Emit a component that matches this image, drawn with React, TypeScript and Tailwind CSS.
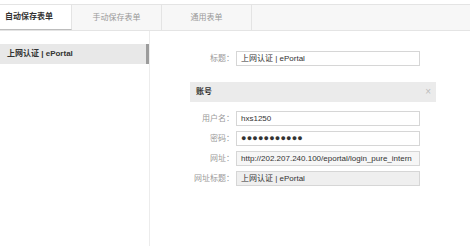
import React from "react";

const font = { fontFamily: '"Liberation Sans", "Noto Sans CJK SC", sans-serif' };

function Row({ label, children }: { label: string; children: React.ReactNode }) {
  return (
    <div className="flex items-center h-[15px]">
      <div className="w-[46px] pr-[2px] text-right text-[#999] whitespace-nowrap">{label}</div>
      {children}
    </div>
  );
}

function Field({ value, bg = "bg-white", dots = false }: { value: string; bg?: string; dots?: boolean }) {
  return (
    <div
      className={`w-[184px] h-[15px] border border-[#d6d6d6] ${bg} flex items-center pl-[4px] overflow-hidden whitespace-nowrap text-[#333]`}
    >
      {dots ? <span className="text-[9px] tracking-[0.2px] leading-none">●●●●●●●●●●●</span> : value}
    </div>
  );
}

export default function App() {
  return (
    <div className="w-[470px] h-[246px] bg-white flex flex-col text-[8px] overflow-hidden" style={font}>
      <div className="h-[4px] shrink-0" />
      <div className="flex h-[27px] shrink-0 bg-[#f7f7f7] border-t border-b border-[#e4e4e4]">
        <div className="w-[72px] bg-white border-r border-[#e4e4e4] border-b border-b-[#bdbdbd] flex items-center pl-[5px] font-bold text-[#333]">
          自动保存表单
        </div>
        <div className="w-[90px] border-r border-[#e4e4e4] flex items-center justify-center text-[#999]">
          手动保存表单
        </div>
        <div className="w-[90px] border-r border-[#e4e4e4] flex items-center justify-center text-[#999]">
          通用表单
        </div>
        <div className="flex-1" />
      </div>
      <div className="flex flex-1">
        <div className="w-[150px] border-r border-[#ececec] pt-[13px]">
          <div className="h-[20px] bg-[#e8e8e8] border-r-[3px] border-[#9c9c9c] flex items-center pl-[7px] font-bold text-[#333] whitespace-nowrap">
            上网认证 | ePortal
          </div>
        </div>
        <div className="flex-1 pl-[40px] pt-[20px]">
          <div className="w-[246px] flex flex-col">
            <Row label="标题：">
              <Field value="上网认证 | ePortal" />
            </Row>
            <div className="mt-[16px] h-[20px] bg-[#ebebeb] flex items-center justify-between pl-[6px] pr-[5px]">
              <span className="font-bold text-[#333]">账号</span>
              <span className="text-[#bbbbbb] text-[10px] leading-none">×</span>
            </div>
            <div className="mt-[9px] flex flex-col gap-[5px]">
              <Row label="用户名：">
                <Field value="hxs1250" />
              </Row>
              <Row label="密码：">
                <Field value="" dots />
              </Row>
              <Row label="网址：">
                <Field value="http://202.207.240.100/eportal/login_pure_intern" bg="bg-[#f6f6f6]" />
              </Row>
              <Row label="网址标题：">
                <Field value="上网认证 | ePortal" bg="bg-[#efefef]" />
              </Row>
            </div>
          </div>
        </div>
      </div>
    </div>
  );
}
